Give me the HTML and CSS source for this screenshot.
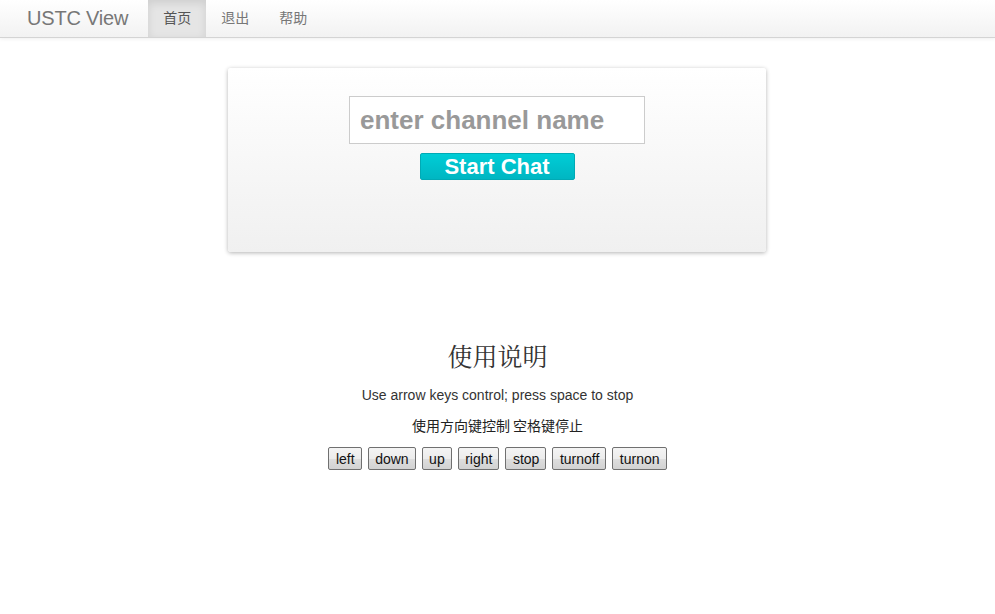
FILE: index.html
```html
<!DOCTYPE html>
<html lang="zh">
<head>
<meta charset="utf-8">
<title>USTC View</title>
<link rel="stylesheet" href="styles.css">
</head>
<body>
<header class="navbar">
  <a class="brand" href="#">USTC View</a>
  <nav class="nav">
    <a class="nav-item active" href="#">首页</a>
    <a class="nav-item" href="#">退出</a>
    <a class="nav-item" href="#">帮助</a>
  </nav>
</header>
<main class="main">
  <section class="card">
    <input class="channel-input" type="text" placeholder="enter channel name">
    <button class="start-btn">Start Chat</button>
  </section>
  <section class="help">
    <h2 class="help-title">使用说明</h2>
    <p class="help-line">Use arrow keys control; press space to stop</p>
    <p class="help-line cjk">使用方向键控制 空格键停止</p>
    <div class="controls">
      <button class="ctl">left</button>
      <button class="ctl">down</button>
      <button class="ctl">up</button>
      <button class="ctl">right</button>
      <button class="ctl">stop</button>
      <button class="ctl">turnoff</button>
      <button class="ctl">turnon</button>
    </div>
  </section>
</main>
</body>
</html>
```
FILE: styles.css
```css
* { box-sizing: border-box; }
html, body { margin: 0; padding: 0; background: #fff; }
body {
  font-family: "Liberation Sans", Arial, "Noto Sans CJK SC", sans-serif;
  color: #333;
  font-size: 14px;
}
.navbar {
  height: 38px;
  display: flex;
  align-items: stretch;
  background: linear-gradient(#ffffff, #f2f2f2);
  border-bottom: 1px solid #d4d4d4;
  box-shadow: 0 1px 4px rgba(0,0,0,0.065);
  padding-left: 27px;
}
.brand {
  font-size: 20px;
  color: #777;
  text-decoration: none;
  line-height: 36px;
  margin-right: 20px;
  letter-spacing: -0.2px;
}
.nav { display: flex; }
.nav-item {
  font-family: "Noto Sans CJK SC", sans-serif;
  font-size: 14px;
  color: #777;
  text-decoration: none;
  padding: 0 15px;
  line-height: 35px;
  height: 37px;
}
.nav-item.active {
  background: #e5e5e5;
  box-shadow: inset 0 3px 8px rgba(0,0,0,0.1);
  color: #555;
}
.main {
  display: flex;
  flex-direction: column;
  align-items: center;
  padding-top: 30px;
}
.card {
  width: 538px;
  height: 184px;
  margin-left: -1px;
  background: linear-gradient(#ffffff, #f0f0f0);
  border-radius: 3px;
  box-shadow: 0 1px 4px rgba(0,0,0,0.3);
  display: flex;
  flex-direction: column;
  align-items: center;
  padding-top: 28px;
}
.channel-input {
  width: 296px;
  height: 48px;
  border: 1px solid #ccc;
  background: #fff;
  font-family: "Liberation Sans", Arial, sans-serif;
  font-weight: bold;
  font-size: 26px;
  padding: 0 10px;
  color: #555;
  outline: none;
}
.channel-input::placeholder { color: #999; }
.start-btn {
  margin-top: 9px;
  width: 155px;
  height: 27px;
  border: 1px solid #00aab5;
  border-radius: 2px;
  background: linear-gradient(#00cdd6, #00b6c2);
  color: #fff;
  font-family: "Liberation Sans", Arial, sans-serif;
  font-weight: bold;
  font-size: 22px;
  line-height: 25px;
  padding: 0;
}
.help {
  margin-top: 88px;
  display: flex;
  flex-direction: column;
  align-items: center;
}
.help-title {
  margin: 0;
  font-family: "Noto Serif CJK SC", "Noto Sans CJK SC", serif;
  font-weight: normal;
  font-size: 25px;
  line-height: 30px;
  color: #333;
}
.help-line {
  margin: 15px 0 0;
  font-size: 14px;
  line-height: 20px;
  color: #333;
}
.help-line.cjk {
  margin-top: 10px;
  font-family: "Noto Sans CJK SC", sans-serif;
  color: #222;
}
.controls {
  margin-top: 12px;
  display: flex;
  gap: 6px;
}
.ctl {
  font-family: "Liberation Sans", Arial, sans-serif;
  font-size: 14px;
  color: #111;
  height: 23px;
  padding: 0 6px 0 6.5px;
  border: 1px solid #707070;
  border-radius: 2px;
  background: linear-gradient(#f4f4f4 0%, #ececec 50%, #dedede 51%, #d2d2d2 100%);
  line-height: 20px;
}
```
